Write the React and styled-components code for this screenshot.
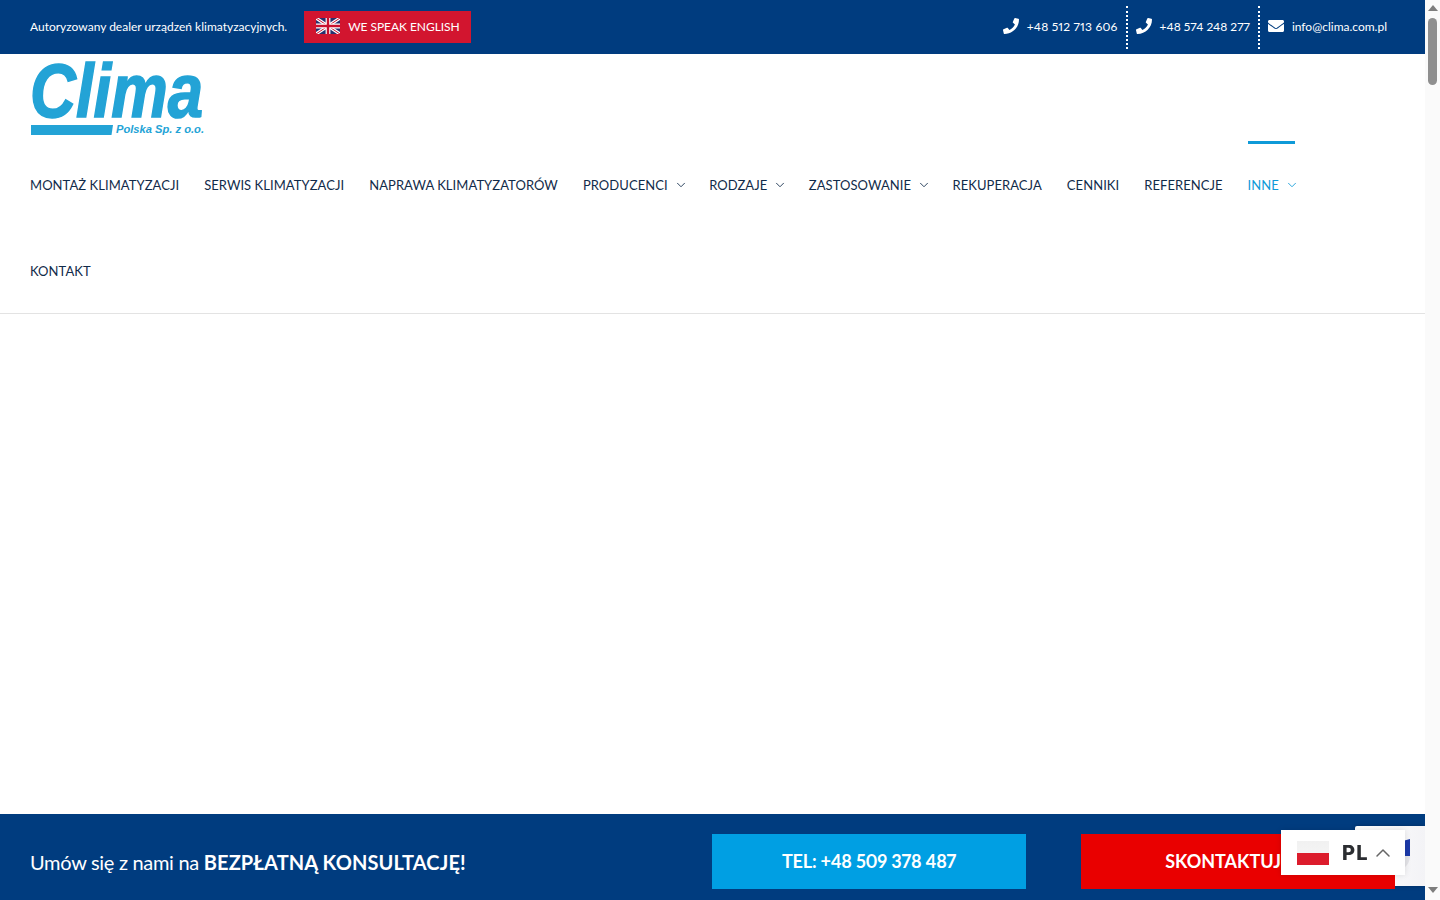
import styled, { createGlobalStyle } from "styled-components";
import { FaPhone, FaEnvelope } from "react-icons/fa";
import { FiChevronDown, FiChevronUp } from "react-icons/fi";

const GlobalStyle = createGlobalStyle`
  body {
    margin: 0;
    background: #fff;
    font-family: Lato, "Liberation Sans", sans-serif;
    font-variant-numeric: proportional-nums;
  }
  * {
    box-sizing: border-box;
  }
`;

const Page = styled.div`
  height: 900px;
  margin-right: 15px;
  overflow: hidden;
`;

const TopBar = styled.div`
  align-items: center;
  background: #003c7f;
  color: #fff;
  display: flex;
  font-size: 12px;
  height: 54px;
  justify-content: space-between;
  padding: 0 30px;
`;

const TopLeft = styled.div`
  align-items: center;
  display: flex;
  gap: 17px;
`;

const Tagline = styled.span`
  margin-top: -2px;
`;

const EnglishLink = styled.a`
  align-items: center;
  background: #d2152f;
  color: #fff;
  display: flex;
  gap: 8px;
  height: 32px;
  letter-spacing: -0.05px;
  padding: 0 11px 2px 12px;
`;

const TopRight = styled.div`
  align-items: center;
  display: flex;
`;

const Contact = styled.div`
  align-items: center;
  border-left: ${(props) => (props.first ? "none" : "2px dotted #fff")};
  display: flex;
  gap: 8px;
  height: 43px;
  letter-spacing: ${(props) => props.spacing || 0}px;
  padding: 0 8px 2px;

  svg {
    font-size: 16px;
    width: 16px;
  }
`;

const Header = styled.header`
  border-bottom: 1px solid #e3e3e3;
  padding: 0 30px;
`;

const LogoArea = styled.div`
  height: 87px;
`;

const LogoSvg = styled.svg`
  display: block;
  overflow: visible;
`;

const LogoWord = styled.text`
  fill: #23a3d6;
  font-family: "Liberation Sans", Arial, sans-serif;
  font-size: 76px;
  font-style: italic;
  font-weight: 700;
  stroke: #23a3d6;
  stroke-width: 1.6px;
`;

const LogoSub = styled.text`
  fill: #23a3d6;
  font-family: "Liberation Sans", Arial, sans-serif;
  font-size: 11px;
  font-style: italic;
  font-weight: 700;
`;

const Nav = styled.nav`
  display: flex;
  flex-wrap: wrap;
  gap: 0 25px;
  max-width: 1330px;
`;

const NavItem = styled.a`
  align-items: center;
  border-top: 3px solid ${(props) => (props.active ? "#0f9ad8" : "transparent")};
  color: ${(props) => (props.active ? "#0f9ad8" : "#112b4a")};
  display: flex;
  font-size: 13px;
  gap: 4px;
  height: 86px;
  letter-spacing: 0.06px;
  padding-bottom: 1px;
  white-space: nowrap;

  svg {
    font-size: 14px;
    margin-left: 2px;
    margin-right: -3.5px;
    stroke-width: 1.5;
  }
`;

const BottomBar = styled.div`
  align-items: flex-start;
  background: #003c7f;
  bottom: 0;
  color: #fff;
  display: flex;
  height: 86px;
  left: 0;
  padding: 20px 30px;
  position: fixed;
  right: 15px;
`;

const Consult = styled.div`
  flex: 1;
  font-size: 20px;
  letter-spacing: -0.3px;
  line-height: 56px;

  b {
    font-weight: 700;
    letter-spacing: 0.1px;
  }
`;

const Cta = styled.a`
  align-items: center;
  background: ${(props) => props.color};
  color: #fff;
  display: flex;
  font-size: 18px;
  font-weight: 700;
  height: 55px;
  justify-content: center;
  letter-spacing: ${(props) => props.spacing || 0}px;
  margin-left: ${(props) => props.offset || 0}px;
  padding-bottom: 2px;
  position: relative;
  width: 314px;
  z-index: 2;
`;

const RecaptchaBadge = styled.div`
  background: linear-gradient(90deg, #fff, #f3f3f6);
  border-radius: 2px 0 0 2px;
  box-shadow: 0 0 4px rgba(0, 0, 0, 0.25);
  height: 60px;
  left: 1355px;
  position: absolute;
  top: 12px;
  width: 70px;
  z-index: 1;
`;

const LangSwitch = styled.div`
  align-items: center;
  background: #fff;
  bottom: 25px;
  box-shadow: 0 0 6px rgba(0, 0, 0, 0.12);
  color: #2b2d31;
  display: flex;
  font-family: Inter, "Liberation Sans", sans-serif;
  font-size: 20px;
  font-weight: 800;
  height: 45px;
  left: 1281px;
  letter-spacing: 1.2px;
  padding-left: 16px;
  position: fixed;
  width: 124px;

  svg {
    color: #666;
    font-size: 24px;
    margin-left: 2px;
    stroke-width: 1.5;
  }
`;

const PlFlag = styled.div`
  background: linear-gradient(#f1f1f1 0, #f4f4f4 50%, #dc1c2c 50%);
  height: 24px;
  margin-right: 13px;
  width: 32px;
`;

const ScrollTrack = styled.div`
  align-items: center;
  background: #fafafa;
  bottom: 0;
  display: flex;
  flex-direction: column;
  padding: 5px 0 7px;
  position: fixed;
  right: 0;
  top: 0;
  width: 15px;
`;

const ScrollArrow = styled.div`
  border-left: 5px solid transparent;
  border-right: 5px solid transparent;
  border-${(props) => (props.down ? "top" : "bottom")}: 6px solid #7d7d7d;
  margin-top: ${(props) => (props.down ? "auto" : 0)};
`;

const ScrollThumb = styled.div`
  background: #8f8f8f;
  border-radius: 5px;
  height: 67px;
  margin-top: 7px;
  width: 9px;
`;

const UkFlag = () => (
  <svg width="24" height="16" viewBox="0 0 60 40">
    <rect width="60" height="40" fill="#27306e" />
    <path d="M0 0L60 40M60 0L0 40" stroke="#fff" strokeWidth="8" />
    <path d="M0 0L60 40M60 0L0 40" stroke="#c8102e" strokeWidth="2.5" />
    <path d="M30 0V40M0 20H60" stroke="#fff" strokeWidth="12" />
    <path d="M30 0V40M0 20H60" stroke="#c8102e" strokeWidth="6" />
  </svg>
);

const RecaptchaIcon = () => (
  <svg width="70" height="60" viewBox="0 0 70 60">
    <path d="M44 16l11-3v17H44z" fill="#1c3aa9" />
    <path d="M40 30h15c0 8-6 14-13 14z" fill="#e4e4e8" />
  </svg>
);

const LogoMark = () => (
  <LogoSvg width="180" height="87" viewBox="0 0 180 87">
    <LogoWord x="0" y="63" textLength="173" lengthAdjust="spacingAndGlyphs">
      Clima
    </LogoWord>
    <path d="M1 71h82l-1.5 10H1z" fill="#23a3d6" />
    <LogoSub x="86" y="79" textLength="88" lengthAdjust="spacingAndGlyphs">
      Polska Sp. z o.o.
    </LogoSub>
  </LogoSvg>
);

const App = () => {
  return (
    <>
      <GlobalStyle />
      <Page>
        <TopBar>
          <TopLeft>
            <Tagline>Autoryzowany dealer urządzeń klimatyzacyjnych.</Tagline>
            <EnglishLink>
              <UkFlag />
              WE SPEAK ENGLISH
            </EnglishLink>
          </TopLeft>
          <TopRight>
            <Contact first spacing={0.2}>
              <FaPhone />
              +48 512 713 606
            </Contact>
            <Contact>
              <FaPhone />
              +48 574 248 277
            </Contact>
            <Contact>
              <FaEnvelope />
              info@clima.com.pl
            </Contact>
          </TopRight>
        </TopBar>
        <Header>
          <LogoArea>
            <LogoMark />
          </LogoArea>
          <Nav>
            <NavItem>MONTAŻ KLIMATYZACJI</NavItem>
            <NavItem>SERWIS KLIMATYZACJI</NavItem>
            <NavItem>NAPRAWA KLIMATYZATORÓW</NavItem>
            <NavItem>
              PRODUCENCI <FiChevronDown />
            </NavItem>
            <NavItem>
              RODZAJE <FiChevronDown />
            </NavItem>
            <NavItem>
              ZASTOSOWANIE <FiChevronDown />
            </NavItem>
            <NavItem>REKUPERACJA</NavItem>
            <NavItem>CENNIKI</NavItem>
            <NavItem>REFERENCJE</NavItem>
            <NavItem active>
              INNE <FiChevronDown />
            </NavItem>
            <NavItem>KONTAKT</NavItem>
          </Nav>
        </Header>
      </Page>
      <BottomBar>
        <Consult>
          Umów się z nami na <b>BEZPŁATNĄ KONSULTACJĘ!</b>
        </Consult>
        <Cta color="#009fe3" spacing={-0.2}>
          TEL: +48 509 378 487
        </Cta>
        <Cta color="#e90000" offset={55}>
          SKONTAKTUJ SIĘ
        </Cta>
        <RecaptchaBadge>
          <RecaptchaIcon />
        </RecaptchaBadge>
      </BottomBar>
      <LangSwitch>
        <PlFlag />
        PL
        <FiChevronUp />
      </LangSwitch>
      <ScrollTrack>
        <ScrollArrow />
        <ScrollThumb />
        <ScrollArrow down />
      </ScrollTrack>
    </>
  );
};

export default App;
